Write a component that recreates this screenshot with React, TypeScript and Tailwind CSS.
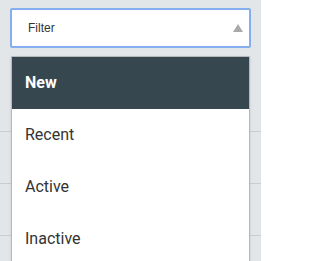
import React from "react";

const items = ["Recent", "Active", "Inactive"];

const App = () => {
  return (
    <div className="relative w-[261px] h-[261px] overflow-hidden bg-[#e3e6e9] font-['Roboto',sans-serif]">
      {/* background table rows */}
      <div className="flex flex-col pt-[80px]">
        <div className="h-[52px] border-b border-[#c9cdd1]"></div>
        <div className="h-[52px] border-b border-[#c9cdd1]"></div>
        <div className="h-[52px] border-b border-[#c9cdd1]"></div>
      </div>

      <div className="absolute left-[10px] top-[8px] w-[241px]">
        <div className="h-[40px] flex items-center justify-between bg-white border-2 border-[#85aef0] rounded-[2px] pl-[16px] pr-[6px]">
          <span className="text-[12px] text-[#333] font-['Liberation_Sans',sans-serif]">Filter</span>
          <svg width="10" height="8" viewBox="0 0 10 8">
            <path d="M5 0 L10 8 L0 8 Z" fill="#aaaaaa" />
          </svg>
        </div>

        <div className="mt-[8px] ml-[1px] w-[239px] bg-white border border-[#b5b9bd] rounded-b-[3px] shadow-sm">
          <div className="h-[52px] flex items-center px-[13px] bg-[#37474f] text-white text-[16px] font-bold">
            New
          </div>
          {items.map((it) => (
            <div key={it} className="h-[52px] flex items-center px-[13px] text-[16px] text-[#333]">
              {it}
            </div>
          ))}
        </div>
      </div>
    </div>
  );
};

export default App;
